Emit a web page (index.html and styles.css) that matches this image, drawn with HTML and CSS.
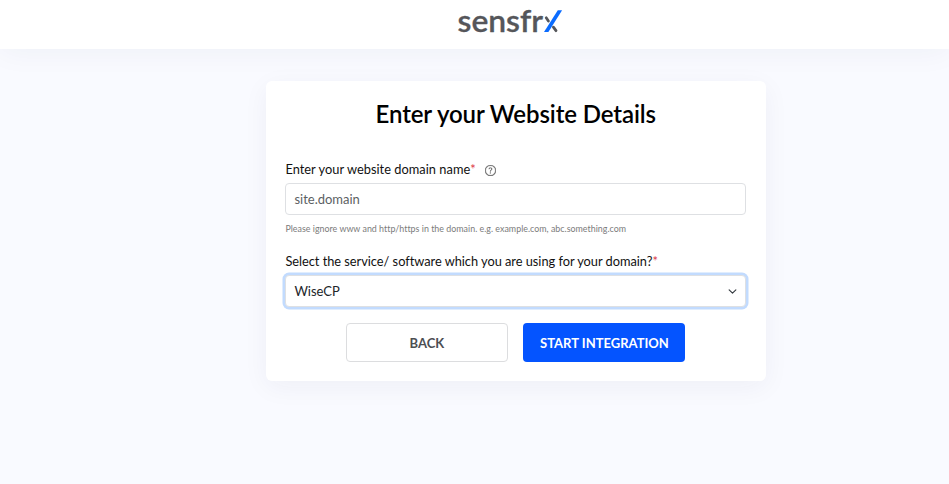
FILE: index.html
```html
<!DOCTYPE html>
<html lang="en">
<head>
<meta charset="utf-8">
<title>Sensfrx</title>
<link rel="stylesheet" href="styles.css">
</head>
<body>
<header class="topbar">
  <svg class="logo" width="108" height="44" viewBox="456 0 108 44" role="img" aria-label="sensfrx">
    <text class="logo-text" x="457.5" y="31.5" textLength="85.5" lengthAdjust="spacingAndGlyphs">sensfr</text>
    <path d="M546.2 17.8l2.2 3.2M553.4 27.2l2.6 3.5" fill="none" stroke="#55565a" stroke-width="2.8" stroke-linecap="round"/>
    <path d="M557.8 10.2h4.3L548.4 32h-4.4z" fill="#0b6cff"/>
  </svg>
</header>
<main class="card">
  <h1 class="title">Enter your Website Details</h1>
  <form class="form">
    <label class="label label-domain" for="domain">Enter your website domain name<span class="required">*</span>
      <svg class="help" width="11" height="11" viewBox="0 0 16 16" fill="#666">
        <path d="M8 15A7 7 0 1 1 8 1a7 7 0 0 1 0 14m0 1A8 8 0 1 0 8 0a8 8 0 0 0 0 16" stroke="#666" stroke-width=".5"/>
        <path d="M5.255 5.786a.237.237 0 0 0 .241.247h.825c.138 0 .248-.113.266-.25.09-.656.54-1.134 1.342-1.134.686 0 1.314.343 1.314 1.168 0 .635-.374.927-.965 1.371-.673.489-1.206 1.06-1.168 1.987l.003.217a.25.25 0 0 0 .25.246h.811a.25.25 0 0 0 .25-.25v-.105c0-.718.273-.927 1.01-1.486.609-.463 1.244-.977 1.244-2.056 0-1.511-1.276-2.241-2.673-2.241-1.267 0-2.655.59-2.75 2.286m1.557 5.763c0 .533.425.927 1.01.927.609 0 1.028-.394 1.028-.927 0-.552-.42-.94-1.029-.94-.584 0-1.009.388-1.009.94"/>
      </svg>
    </label>
    <input class="field" id="domain" type="text" placeholder="site.domain">
    <p class="hint">Please ignore www and http/https in the domain. e.g. example.com, abc.something.com</p>
    <label class="label label-service" for="service">Select the service/ software which you are using for your domain?<span class="required">*</span></label>
    <div class="field select" id="service" tabindex="0">
      <span>WiseCP</span>
      <svg width="9" height="9" viewBox="0 0 16 16" fill="none" stroke="#343a40" stroke-width="2" stroke-linecap="round" stroke-linejoin="round"><path d="m2 5 6 6 6-6"/></svg>
    </div>
    <div class="actions">
      <button class="btn btn-back" type="button">BACK</button>
      <button class="btn btn-start" type="button">START INTEGRATION</button>
    </div>
  </form>
</main>
</body>
</html>
```
FILE: styles.css
```css
* { box-sizing: border-box; }
body {
  margin: 0;
  min-height: 484px;
  background: #f9faff;
  font-family: Lato, "Liberation Sans", sans-serif;
  color: #111;
}
.topbar {
  display: flex;
  justify-content: center;
  height: 49px;
  padding-left: 71px;
  background: #fff;
  box-shadow: 0 0 32px rgba(40, 45, 80, .06);
}
.logo-text {
  font: 600 30.5px Lato, sans-serif;
  fill: #55565a;
  stroke: #55565a;
  stroke-width: .3px;
  stroke-linejoin: round;
}
.card {
  width: 500px;
  height: 300px;
  margin: 32px 0 0 266px;
  padding: 18px 20px 0 19.4px;
  border-radius: 6px;
  background: #fff;
  box-shadow: 0 6px 26px rgba(40, 45, 80, .05);
}
.title {
  margin: 0;
  font-size: 24px;
  font-weight: 600;
  letter-spacing: -.1px;
  line-height: 29px;
  text-align: center;
  color: #000;
}
.form { margin-top: 31px; }
.label {
  display: flex;
  align-items: center;
  height: 20px;
  font-size: 12.8px;
  white-space: nowrap;
}
.label-domain { letter-spacing: .035px; }
.label-service { letter-spacing: -.02px; }
.required { color: #dc3545; }
.help { margin: 2px 0 0 9.5px; }
.field {
  display: block;
  width: 461px;
  height: 32px;
  margin-top: 4px;
  padding: 0 8px;
  border: 1px solid #dee0e3;
  border-radius: 4px;
  background: #fff;
  font: 13px Lato, sans-serif;
  color: #212529;
}
.field::placeholder { color: #5c5f63; opacity: 1; }
.hint {
  margin: 8px 0 16px;
  font-size: 8.9px;
  letter-spacing: .012px;
  line-height: 12px;
  color: #7b7b7b;
  white-space: nowrap;
}
.select {
  display: flex;
  align-items: center;
  justify-content: space-between;
  margin-top: 4px;
  box-shadow: 0 0 0 2.5px #c2dbfe;
}
.actions {
  display: flex;
  justify-content: center;
  gap: 15.5px;
  margin-top: 16px;
}
.btn {
  width: 162px;
  height: 39px;
  padding: 0;
  border-radius: 4px;
  font: 700 13px Lato, sans-serif;
}
.btn-back { border: 1px solid #dcdddf; background: #fff; color: #4c4e52; }
.btn-start { border: 0; background: #0454ff; color: #fff; }
```
